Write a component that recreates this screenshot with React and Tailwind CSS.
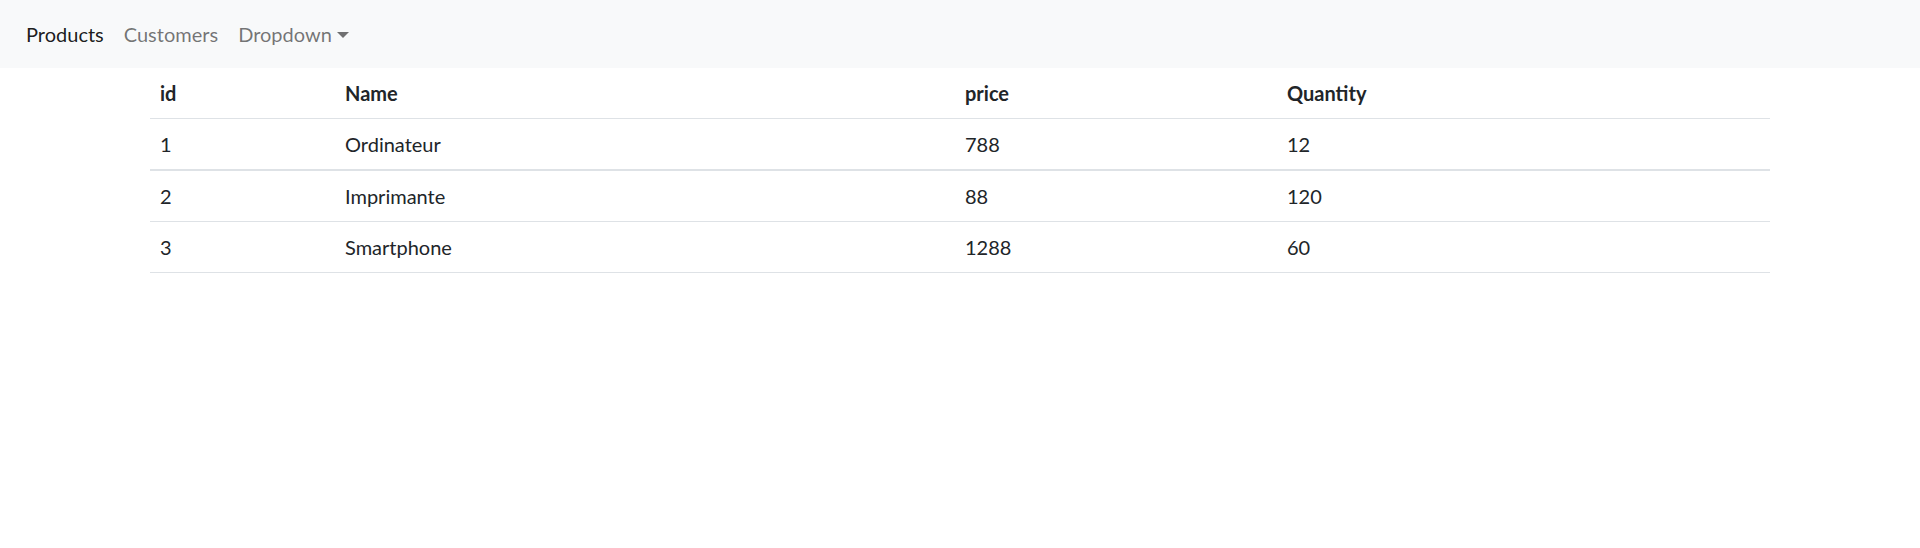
export default function App() {
  const rows = [
    ["1", "Ordinateur", "788", "12"],
    ["2", "Imprimante", "88", "120"],
    ["3", "Smartphone", "1288", "60"],
  ];
  const font = { fontFamily: '"Lato", "Noto Sans", sans-serif' };
  return (
    <div className="min-h-[548px] bg-white text-[#212529]" style={font}>
      <nav className="h-[68px] bg-[#f8f9fa] flex items-center pl-[16px]">
        <a className="px-[10px] text-[20px] leading-[30px] text-[rgba(0,0,0,0.9)]">Products</a>
        <a className="px-[10px] text-[20px] leading-[30px] text-[rgba(0,0,0,0.55)]">Customers</a>
        <a className="px-[10px] text-[20px] leading-[30px] text-[rgba(0,0,0,0.55)] flex items-center">
          Dropdown
          <span className="ml-[5px] mt-[2px] w-0 h-0 border-l-[6px] border-r-[6px] border-t-[6px] border-l-transparent border-r-transparent border-t-[rgba(0,0,0,0.55)]"></span>
        </a>
      </nav>
      <div className="w-[1620px] mx-auto">
        <table className="w-full border-collapse text-[20px] leading-[30px]">
          <colgroup>
            <col className="w-[185px]" />
            <col className="w-[620px]" />
            <col className="w-[322px]" />
            <col className="w-[493px]" />
          </colgroup>
          <thead>
            <tr className="border-b border-[#dee2e6]">
              {["id", "Name", "price", "Quantity"].map((h) => (
                <th key={h} className="text-left font-bold px-[10px] pt-[10px] pb-[10px]">{h}</th>
              ))}
            </tr>
          </thead>
          <tbody>
            {rows.map((r, i) => (
              <tr key={i} className={i === 0 ? "border-b-2 border-[#dee2e6]" : "border-b border-[#dee2e6]"}>
                {r.map((c, j) => (
                  <td key={j} className="px-[10px] py-[10px]">{c}</td>
                ))}
              </tr>
            ))}
          </tbody>
        </table>
      </div>
    </div>
  );
}
